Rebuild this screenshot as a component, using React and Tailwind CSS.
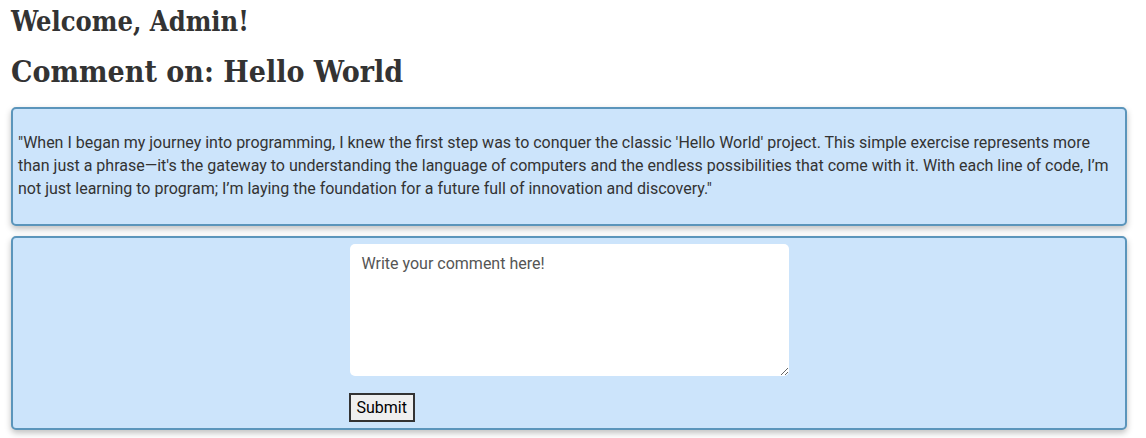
import React, { useState } from "react";

const App = () => {
  const [comment, setComment] = useState("");

  return (
    <div className="min-h-screen bg-white pl-[11px] pr-[19px] pt-[5px] text-[#333] font-['Roboto',sans-serif]">
      <h2 className="font-['DejaVu_Serif_Condensed','DejaVu_Serif',serif] font-bold text-[27px] leading-[34px]">
        Welcome, Admin!
      </h2>
      <h1 className="mt-[13px] font-['DejaVu_Serif_Condensed','DejaVu_Serif',serif] font-bold text-[30px] leading-[40px]">
        Comment on: Hello World
      </h1>

      <div className="mt-[15px] bg-[#cce4fb] border-2 border-[#5b95bb] rounded-[5px] shadow-[0_3px_6px_rgba(0,0,0,0.25)] px-[5px] pt-[6px] pb-[8px]">
        <p className="my-[16px] text-[16px] leading-[23px] text-[#333]">
          "When I began my journey into programming, I knew the first step was to conquer the classic 'Hello World' project. This simple exercise represents more than just a phrase—it's the gateway to understanding the language of computers and the endless possibilities that come with it. With each line of code, I’m not just learning to program; I’m laying the foundation for a future full of innovation and discovery."
        </p>
      </div>

      <div className="mt-[10px] bg-[#cce4fb] border-2 border-[#5b95bb] rounded-[5px] shadow-[0_3px_6px_rgba(0,0,0,0.25)] px-[5px] py-[6px]">
        <form
          className="w-[439px] mx-auto flex flex-col items-start gap-[17px]"
          onSubmit={(e) => e.preventDefault()}
        >
          <textarea
            value={comment}
            onChange={(e) => setComment(e.target.value)}
            placeholder="Write your comment here!"
            className="w-[439px] h-[132px] bg-white rounded-[5px] px-[12px] py-[8px] text-[16px] leading-[23px] text-[#333] placeholder:text-[#555] outline-none resize"
          />
          <button
            type="submit"
            className="-ml-[1px] h-[29px] px-[6px] bg-[#efefef] border-2 border-[#333] text-[16px] leading-[20px] text-black"
          >
            Submit
          </button>
        </form>
      </div>
    </div>
  );
};

export default App;
